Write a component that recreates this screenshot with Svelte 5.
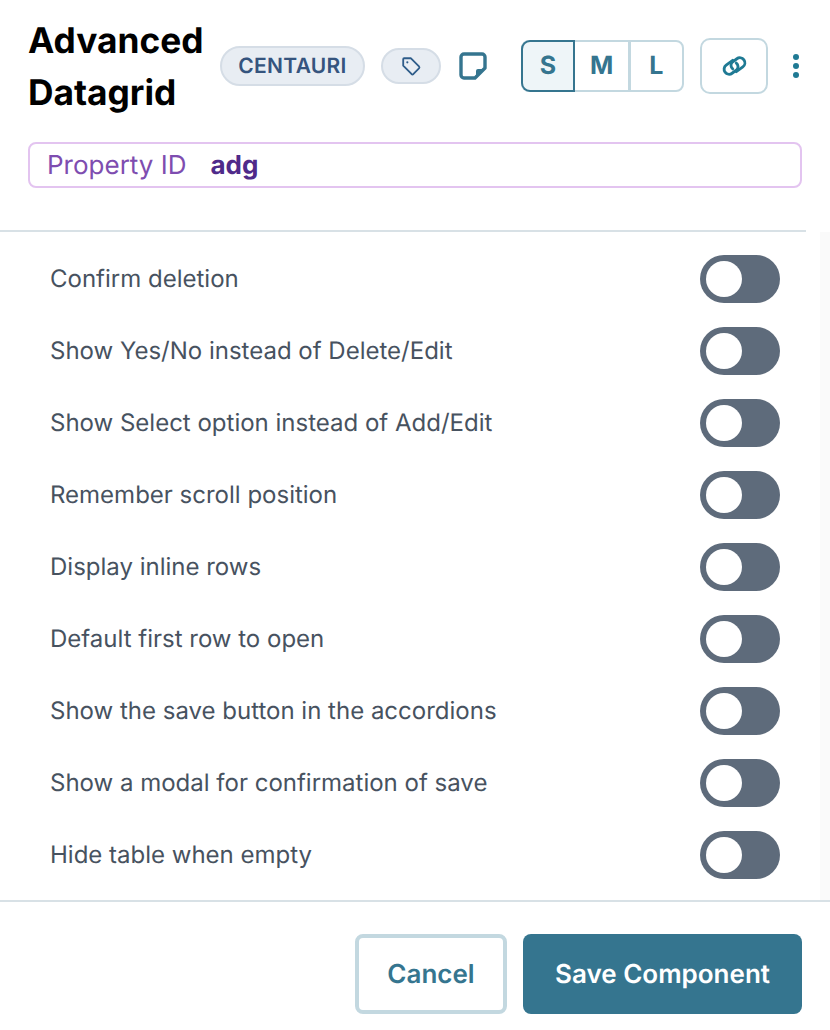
<script>
  const options = [
    "Confirm deletion",
    "Show Yes/No instead of Delete/Edit",
    "Show Select option instead of Add/Edit",
    "Remember scroll position",
    "Display inline rows",
    "Default first row to open",
    "Show the save button in the accordions",
    "Show a modal for confirmation of save",
    "Hide table when empty"
  ];
  let size = $state("S");
</script>

<div class="panel">
  <header>
    <div class="top">
      <h1>Advanced Datagrid</h1>
      <span class="badge">CENTAURI</span>
      <button class="tag" aria-label="Tags">
        <svg width="22" height="22" viewBox="0 0 24 24" fill="none" stroke="#2f5d8a" stroke-width="2" stroke-linejoin="round" stroke-linecap="round">
          <path d="M3.5 4.5a1 1 0 0 1 1-1h7.2l9 9a1.6 1.6 0 0 1 0 2.2l-6 6a1.6 1.6 0 0 1-2.2 0l-9-9z" />
          <circle cx="8" cy="8" r="1.2" fill="#2f5d8a" stroke="none" />
        </svg>
      </button>
      <button class="note" aria-label="Note">
        <svg width="30" height="30" viewBox="0 0 30 30" fill="none">
          <path d="M17 27H6a3 3 0 0 1-3-3V6a3 3 0 0 1 3-3h18a3 3 0 0 1 3 3v11z" stroke="#35758f" stroke-width="3.4" stroke-linejoin="round" />
          <path d="M18 26v-6a2 2 0 0 1 2-2h6z" fill="#35758f" />
        </svg>
      </button>
      <div class="sizes">
        {#each ["S", "M", "L"] as s}
          <button class:active={size === s} onclick={() => (size = s)}>{s}</button>
        {/each}
      </div>
      <button class="link" aria-label="Link">
        <svg width="31" height="24" viewBox="0 0 26 20" fill="none" stroke="#1f7a94" stroke-width="2.4" stroke-linecap="round">
          <path d="M11.5 5.2 6 9.3a4.2 4.2 0 0 0 5 6.8l4-3a3.8 3.8 0 0 0-.5-5.5" />
          <path d="M14.5 14.8 20 10.7a4.2 4.2 0 0 0-5-6.8l-4 3a3.8 3.8 0 0 0 .5 5.5" />
        </svg>
      </button>
      <button class="more" aria-label="More">
        <i></i><i></i><i></i>
      </button>
    </div>
    <div class="property">
      <span class="prop-label">Property ID</span>
      <span class="prop-value">adg</span>
    </div>
  </header>

  <div class="list">
    {#each options as label}
      <div class="row">
        <span>{label}</span>
        <div class="toggle"><div class="knob"></div></div>
      </div>
    {/each}
  </div>

  <footer>
    <button class="cancel">Cancel</button>
    <button class="save">Save Component</button>
  </footer>
</div>

<style>
  :global(body) {
    margin: 0;
    background: #fff;
  }

  .panel {
    width: 830px;
    height: 1030px;
    display: flex;
    flex-direction: column;
    font-family: Inter, "Liberation Sans", sans-serif;
    text-rendering: geometricPrecision;
    overflow: hidden;
  }

  button {
    font-family: inherit;
    text-rendering: inherit;
    background: none;
    border: none;
    padding: 0;
    cursor: pointer;
  }

  header {
    flex: none;
    width: 806px;
    height: 232px;
    box-sizing: border-box;
    padding: 13px 0 0 28px;
    border-bottom: 2px solid #d8e1e6;
  }

  .top {
    display: flex;
    align-items: center;
    height: 106px;
  }

  .top > * {
    flex: none;
  }

  h1 {
    margin: 2px 0 0;
    width: 192px;
    font-size: 35.3px;
    line-height: 52px;
    font-weight: 700;
    color: #000;
  }

  .badge {
    height: 40px;
    width: 145px;
    box-sizing: border-box;
    border: 2px solid #d5dde6;
    background: #e8edf3;
    border-radius: 20px;
    color: #35547e;
    font-size: 21px;
    font-weight: 600;
    letter-spacing: 0.3px;
    display: flex;
    align-items: center;
    justify-content: center;
  }

  .tag {
    margin-left: 16px;
    width: 60px;
    height: 36px;
    box-sizing: border-box;
    border: 2px solid #d5dde6;
    background: #e8edf3;
    border-radius: 18px;
    display: flex;
    align-items: center;
    justify-content: center;
  }

  .note {
    margin-left: 17px;
    width: 30px;
    height: 30px;
    display: flex;
  }

  .sizes {
    margin-left: 33px;
    display: flex;
    height: 52px;
    width: 163px;
    box-sizing: border-box;
    border: 2px solid #c3d8e0;
    border-radius: 8px;
  }

  .sizes button {
    flex: 1;
    font-size: 25px;
    font-weight: 700;
    color: #35758f;
    border-right: 3px solid #c3d8e0;
  }

  .sizes button:last-child {
    border-right: none;
  }

  .sizes button.active {
    flex: none;
    width: 50px;
    background: #eef5f8;
    box-shadow: 0 0 0 2px #35758f;
    border-radius: 7px 0 0 7px;
    border-right: none;
  }

  .sizes button.active + button {
    padding-left: 3px;
  }

  .link {
    margin-left: 16px;
    width: 68px;
    height: 56px;
    box-sizing: border-box;
    border: 2px solid #c3d8e0;
    border-radius: 10px;
    display: flex;
    align-items: center;
    justify-content: center;
  }

  .more {
    margin-left: 18px;
    width: 20px;
    display: flex;
    flex-direction: column;
    align-items: center;
    gap: 3px;
  }

  .more i {
    width: 6px;
    height: 6px;
    border-radius: 50%;
    background: #1f7a94;
  }

  .property {
    margin: 23px 4px 0 0;
    height: 46px;
    box-sizing: border-box;
    border: 2px solid #e3c4f0;
    border-radius: 8px;
    padding: 0 17px;
    display: flex;
    align-items: center;
    gap: 24px;
    font-size: 26px;
  }

  .prop-label {
    color: #7e4db0;
  }

  .prop-value {
    color: #4f2a8a;
    font-weight: 700;
  }

  .list {
    flex: 1;
    box-sizing: border-box;
    padding: 11px 40px 0 50px;
    border-right: 10px solid #fafafa;
  }

  .row {
    height: 72px;
    display: flex;
    align-items: center;
    justify-content: space-between;
    font-size: 24px;
    color: #47525f;
  }

  .row span {
    margin-bottom: 1px;
  }

  .toggle {
    width: 80px;
    height: 48px;
    border-radius: 24px;
    background: #5e6b7b;
    display: flex;
    align-items: center;
    padding-left: 6px;
    box-sizing: border-box;
  }

  .knob {
    width: 36px;
    height: 36px;
    border-radius: 50%;
    background: #fff;
  }

  footer {
    flex: none;
    height: 130px;
    border-top: 2px solid #d8e1e6;
    display: flex;
    justify-content: flex-end;
    gap: 16px;
    padding: 32px 28px 0 0;
    box-sizing: border-box;
  }

  footer button {
    height: 80px;
    border-radius: 8px;
    font-size: 26px;
    font-weight: 600;
    box-sizing: border-box;
  }

  .cancel {
    width: 152px;
    border: 4px solid #c3d8e0;
    color: #35758f;
  }

  .save {
    width: 279px;
    background: #35758f;
    color: #fff;
  }
</style>
